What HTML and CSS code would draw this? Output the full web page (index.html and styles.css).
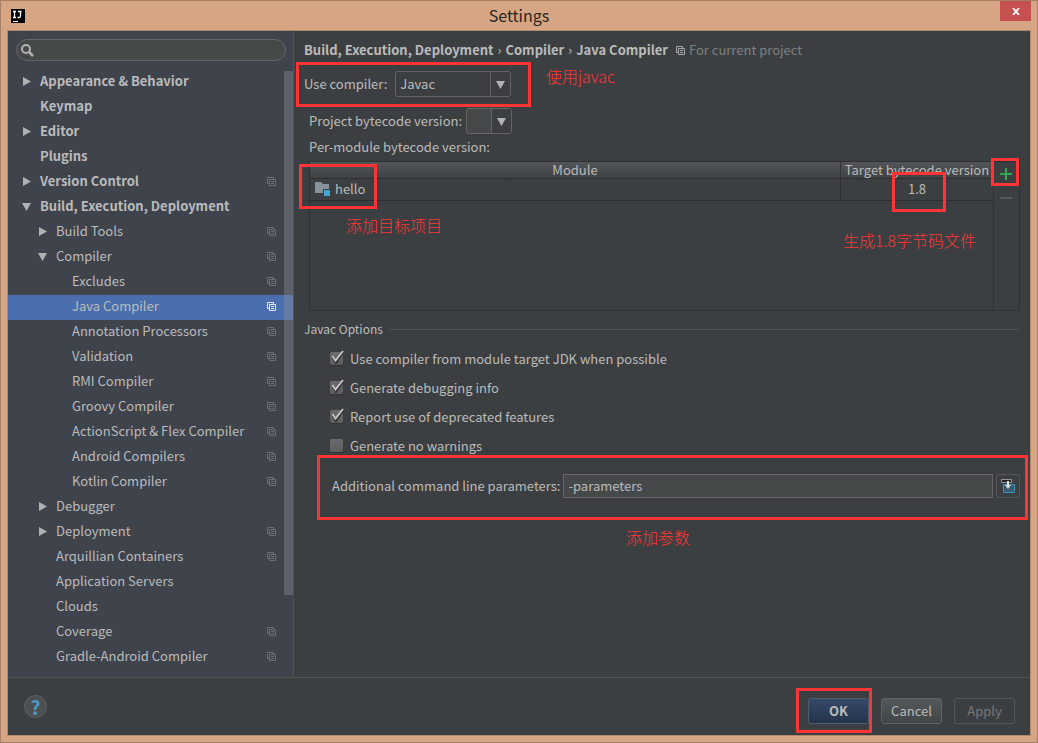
FILE: index.html
```html
<!DOCTYPE html>
<html lang="en">
<head>
<meta charset="utf-8">
<title>Settings</title>
<link rel="stylesheet" href="styles.css">
</head>
<body>
<svg class="defs" width="0" height="0" aria-hidden="true">
  <symbol id="right" viewBox="0 0 9 9"><path d="M1 0L9 4.500L1 9Z" fill="#b0b2b4"/></symbol>
  <symbol id="down" viewBox="0 0 9 9"><path d="M0 1H9L4.500 9Z" fill="#b0b2b4"/></symbol>
  <symbol id="copy" viewBox="0 0 9 9"><path d="M2 6.500H.5V.5H6.500V2M2.500 2.500H8.500V8.500H2.500ZM4 4.500H7M4 6.500H7" fill="none" stroke="currentColor"/></symbol>
  <symbol id="tick" viewBox="0 0 16 16"><path d="M4 7L7 12L14 2" fill="none" stroke="#2e2f30" stroke-width="3"/><path d="M3.500 6L6.500 10.500L14 1" fill="none" stroke="#c4c4c4" stroke-width="2"/></symbol>
</svg>
<div class="window">
  <header class="titlebar">
    <svg class="logo" viewBox="0 0 14 14"><path d="M0 0H14V14H0Z"/><path d="M2 2.500H5M3.500 2V9M2 8.500H5M7 2.500H10.500M9.500 2V7Q9.500 8.500 8 8.500H6.500" fill="none" stroke="#fff" stroke-width="1.300"/><path d="M2 12H7V13H2Z" fill="#fff"/></svg>
    <h1>Settings</h1>
    <button class="close" aria-label="Close"><svg viewBox="0 0 8 7"><path d="M1 0L7 7M7 0L1 7" stroke="#fff" stroke-width="1.800"/></svg></button>
  </header>
  <div class="dialog">
    <div class="body">
      <aside class="sidebar">
        <label class="search"><svg viewBox="0 0 13 13"><circle cx="5" cy="5" r="4" fill="none" stroke="#b0b2b2" stroke-width="2"/><path d="M8 8L12 12" stroke="#b0b2b2" stroke-width="2.500"/></svg><input type="text" aria-label="Search settings"></label>
        <nav class="tree">
          <a href="#" class="row top"><svg class="arrow"><use href="#right"/></svg><span>Appearance &amp; Behavior</span></a>
          <a href="#" class="row top"><i class="arrow"></i><span>Keymap</span></a>
          <a href="#" class="row top"><svg class="arrow"><use href="#right"/></svg><span>Editor</span></a>
          <a href="#" class="row top"><i class="arrow"></i><span>Plugins</span></a>
          <a href="#" class="row top"><svg class="arrow"><use href="#right"/></svg><span>Version Control</span><svg class="copy"><use href="#copy"/></svg></a>
          <a href="#" class="row top"><svg class="arrow"><use href="#down"/></svg><span>Build, Execution, Deployment</span></a>
          <a href="#" class="row mid"><svg class="arrow"><use href="#right"/></svg><span>Build Tools</span><svg class="copy"><use href="#copy"/></svg></a>
          <a href="#" class="row mid"><svg class="arrow"><use href="#down"/></svg><span>Compiler</span><svg class="copy"><use href="#copy"/></svg></a>
          <a href="#" class="row leaf"><span>Excludes</span><svg class="copy"><use href="#copy"/></svg></a>
          <a href="#" class="row leaf selected"><span>Java Compiler</span><svg class="copy"><use href="#copy"/></svg></a>
          <a href="#" class="row leaf"><span>Annotation Processors</span><svg class="copy"><use href="#copy"/></svg></a>
          <a href="#" class="row leaf"><span>Validation</span><svg class="copy"><use href="#copy"/></svg></a>
          <a href="#" class="row leaf"><span>RMI Compiler</span><svg class="copy"><use href="#copy"/></svg></a>
          <a href="#" class="row leaf"><span>Groovy Compiler</span><svg class="copy"><use href="#copy"/></svg></a>
          <a href="#" class="row leaf"><span>ActionScript &amp; Flex Compiler</span><svg class="copy"><use href="#copy"/></svg></a>
          <a href="#" class="row leaf"><span>Android Compilers</span><svg class="copy"><use href="#copy"/></svg></a>
          <a href="#" class="row leaf"><span>Kotlin Compiler</span><svg class="copy"><use href="#copy"/></svg></a>
          <a href="#" class="row mid"><svg class="arrow"><use href="#right"/></svg><span>Debugger</span></a>
          <a href="#" class="row mid"><svg class="arrow"><use href="#right"/></svg><span>Deployment</span><svg class="copy"><use href="#copy"/></svg></a>
          <a href="#" class="row mid"><i class="arrow"></i><span>Arquillian Containers</span><svg class="copy"><use href="#copy"/></svg></a>
          <a href="#" class="row mid"><i class="arrow"></i><span>Application Servers</span></a>
          <a href="#" class="row mid"><i class="arrow"></i><span>Clouds</span></a>
          <a href="#" class="row mid"><i class="arrow"></i><span>Coverage</span><svg class="copy"><use href="#copy"/></svg></a>
          <a href="#" class="row mid"><i class="arrow"></i><span>Gradle-Android Compiler</span><svg class="copy"><use href="#copy"/></svg></a>
          <div class="thumb"></div>
        </nav>
      </aside>
      <main class="main">
        <div class="crumbs"><b>Build, Execution, Deployment</b><span>›</span><b>Compiler</b><span>›</span><b>Java Compiler</b><svg class="copy"><use href="#copy"/></svg><span class="hint">For current project</span></div>
        <div class="field compiler">
          <label for="compiler">Use compiler:</label>
          <div class="combo wide"><select id="compiler"><option>Javac</option></select><span class="drop"><svg><use href="#down"/></svg></span></div>
          <div class="mark"></div><span class="note">使用javac</span>
        </div>
        <div class="field level">
          <label for="level">Project bytecode version:</label>
          <div class="combo"><select id="level"><option></option></select><span class="drop"><svg><use href="#down"/></svg></span></div>
        </div>
        <div class="caption">Per-module bytecode version:</div>
        <div class="modules">
          <div class="grid">
            <table>
              <thead><tr><th>Module</th><th class="target">Target bytecode version</th></tr></thead>
              <tbody><tr>
                <td><div class="module"><svg viewBox="0 0 16 14"><path d="M0 0H6L8 2H14V11H0Z" fill="#87939a"/><path d="M8 7H16V14H8Z" fill="#3c3f41"/><path d="M9 8H15V14H9Z" fill="#40a5d1"/></svg>hello<div class="mark"></div><span class="note">添加目标项目</span></div></td>
                <td><div class="version">1.8<div class="mark"></div><span class="note">生成1.8字节码文件</span></div></td>
              </tr></tbody>
            </table>
          </div>
          <div class="tools">
            <button aria-label="Add"><svg viewBox="0 0 12 12"><path d="M0 6H12M6 0V12" stroke="#2eab4e" stroke-width="2"/></svg><span class="mark"></span></button>
            <button aria-label="Remove"><svg viewBox="0 0 12 12"><path d="M0 6H12" stroke="#58595a" stroke-width="2"/></svg></button>
          </div>
        </div>
        <section class="options">
          <h2>Javac Options</h2>
          <label class="check"><input type="checkbox" checked><svg><use href="#tick"/></svg><span>Use compiler from module target JDK when possible</span></label>
          <label class="check"><input type="checkbox" checked><svg><use href="#tick"/></svg><span>Generate debugging info</span></label>
          <label class="check"><input type="checkbox" checked><svg><use href="#tick"/></svg><span>Report use of deprecated features</span></label>
          <label class="check"><input type="checkbox"><svg><use href="#tick"/></svg><span>Generate no warnings</span></label>
          <div class="params">
            <label for="params">Additional command line parameters:</label>
            <input id="params" type="text" value="-parameters">
            <button aria-label="Expand"><svg viewBox="0 0 14 14"><path d="M2.500 5.500H13.500V13.500H2.500Z" fill="#375b70" stroke="#4191bd"/><path d="M.5 .5H10.500V3.500H.5Z" fill="#222428" stroke="#909294"/><path d="M6 2H8V6H10L7 10L4 6H6Z" fill="#dcdcdc"/></svg></button>
            <div class="mark"></div><span class="note">添加参数</span>
          </div>
        </section>
      </main>
    </div>
    <footer class="footer">
      <button class="help" aria-label="Help">?</button>
      <div class="confirm"><button class="btn ok">OK</button><span class="mark"></span></div>
      <button class="btn">Cancel</button>
      <button class="btn apply" disabled>Apply</button>
    </footer>
  </div>
</div>
</body>
</html>
```
FILE: styles.css
```css
* { box-sizing: border-box; }
body { margin: 0; }
body, button, input, select { font: 13px/20px "Noto Sans CJK SC", "Noto Sans", sans-serif; color: #bbbbbb; }
button, input, select { margin: 0; padding: 0; border: 0; background: none; }
svg { display: block; flex: none; }
a { color: inherit; text-decoration: none; }
.defs { position: absolute; }

.window { min-height: 100vh; display: flex; flex-direction: column; padding: 0 6px 6px; border: 1px solid #a67f65; background: #d6a583; }
.titlebar { display: flex; align-items: center; height: 29px; position: relative; }
.logo { width: 14px; height: 14px; margin-left: 4px; }
.titlebar h1 { flex: 1; margin: 0; padding: 0 18px 2px 0; text-align: center; font-size: 16px; font-weight: 400; color: #2b2622; }
.close { position: absolute; top: 0; right: 0; width: 31px; height: 20px; background: #c75050; display: grid; place-items: center; }
.close svg { width: 8px; height: 7px; }
.dialog { flex: 1; display: flex; flex-direction: column; border: 1px solid #b0896c; background: #3c3f41; }
.body { flex: 1; display: flex; }

.sidebar { width: 286px; flex: none; padding-top: 8px; border-right: 1px solid #515456; background: #3f434c; }
.search { display: flex; align-items: center; gap: 4px; height: 22px; margin: 0 7px 9px 8px; padding: 0 8px 0 4px; border: 1px solid #646566; border-radius: 11px; background: #45494a; }
.search svg { width: 13px; height: 13px; }
.search input { flex: 1; min-width: 0; outline: none; }
.tree { position: relative; padding-bottom: 7px; }
.row { display: flex; align-items: center; height: 25px; padding: 0 17px 2px 0; }
.row span { flex: 1; padding-bottom: 2px; white-space: nowrap; }
.arrow { width: 9px; height: 9px; flex: none; }
.copy { width: 9px; height: 9px; color: #6c7075; }
.top { padding-left: 14px; gap: 9px; font-weight: 700; }
.mid { padding-left: 30px; gap: 9px; }
.leaf { padding-left: 64px; }
.selected { background: #4b6eaf; }
.selected .copy { color: #e6eaf0; }
.thumb { position: absolute; top: 1px; right: 0; width: 9px; height: 524px; background: rgba(140, 142, 150, .4); }

.main { flex: 1; min-width: 0; padding: 9px 10px 0; }
.mark { position: absolute; border: 3px solid #ff3535; pointer-events: none; }
.note { position: absolute; color: #ff3535; font-size: 16px; line-height: 20px; font-weight: 300; white-space: nowrap; }
.crumbs { display: flex; align-items: center; gap: 4px; height: 20px; }
.crumbs .copy { color: #a5a7a8; margin-left: 4px; }
.hint { color: #7d7f80; }
.field { display: flex; align-items: center; position: relative; height: 26px; }
.compiler { margin-top: 11px; gap: 8px; }
.level { margin: 11px 0 0 5px; gap: 4px; }
.combo { position: relative; width: 46px; height: 26px; }
.combo select { appearance: none; width: 100%; height: 100%; padding-left: 4px; border: 1px solid #646464; border-radius: 3px; background: #45494a; }
.combo.wide { width: 116px; }
.combo.wide select { background: #3c3f41; }
.drop { position: absolute; top: 1px; right: 1px; bottom: 1px; width: 20px; display: grid; place-items: center; border-left: 1px solid #646464; background: #3c3f41; pointer-events: none; }
.drop svg { width: 9px; height: 9px; }
.compiler .mark { left: -8px; top: -9px; width: 235px; height: 45px; }
.compiler .note { left: 242px; top: -5px; }
.caption { margin: 3px 0 4px 5px; }

.modules { display: flex; height: 150px; margin-left: 5px; border: 1px solid #2f3132; }
.grid { flex: 1; }
table { width: 100%; border-collapse: separate; border-spacing: 0; table-layout: fixed; }
th { height: 17px; padding: 0; line-height: 16px; font-weight: 400; white-space: nowrap; border-bottom: 1px solid #2b2d2e; background: linear-gradient(#525658, #3f4244); }
td { height: 22px; padding: 0 0 1px; border-bottom: 1px solid #2b2d2e; }
th.target { width: 153px; }
th + th, td + td { border-left: 1px solid #2f3132; }
.module { display: flex; align-items: center; gap: 4px; position: relative; padding-left: 5px; }
.module svg { width: 16px; height: 14px; }
.module .mark { left: -11px; top: -15px; width: 78px; height: 45px; }
.module .note { left: 36px; top: 36px; }
.version { position: relative; text-align: center; }
.version .mark { left: 51px; top: -7px; width: 54px; height: 40px; }
.version .note { left: 2px; top: 51px; }
.tools { width: 26px; border-left: 1px solid #2f3132; }
.tools button { position: relative; display: grid; place-items: center; width: 24px; height: 24px; }
.tools svg { width: 12px; height: 12px; }
.tools .mark { left: -3px; top: -4px; width: 28px; height: 28px; }

.options { margin-top: 8px; }
h2 { display: flex; align-items: center; gap: 6px; margin: 0 1px 5px 0; font-size: 12px; line-height: 20px; font-weight: 400; }
h2::after { content: ""; flex: 1; height: 1px; background: #515455; }
.check { display: flex; align-items: center; position: relative; height: 29px; padding-left: 26px; gap: 7px; }
.check input { appearance: none; width: 13px; height: 13px; border-radius: 2px; background: linear-gradient(#6a6b6c, #5c5e5f); box-shadow: 0 1px 1px #2f3132; }
.check svg { position: absolute; left: 25px; top: 6px; width: 16px; height: 16px; visibility: hidden; }
.check input:checked + svg { visibility: visible; }
.params { display: flex; align-items: center; position: relative; height: 24px; margin: 14px 0 0 28px; }
.params input { flex: 1; min-width: 0; height: 24px; margin: 0 3px 0 2px; padding: 0 5px 2px; border: 1px solid #646464; background: #45494a; }
.params button { display: grid; place-items: center; width: 24px; height: 24px; border: 1px solid #555859; border-radius: 2px; }
.params button svg { width: 14px; height: 14px; }
.params .mark { left: -15px; right: -8px; top: -19px; height: 65px; }
.params .note { left: 294px; top: 53px; }

.footer { display: flex; align-items: center; gap: 12px; height: 58px; padding: 9px 15px 0 16px; border-top: 1px solid #515455; }
.help { width: 23px; height: 23px; margin: -9px auto 0 0; border: 1px solid #5c6062; border-radius: 50%; background: #4c5052; color: #4a9cc7; font-size: 19px; line-height: 20px; font-weight: 700; }
.btn { width: 61px; height: 26px; border: 1px solid #5f6263; border-radius: 3px; background: linear-gradient(#53585a, #414546); }
.confirm { position: relative; display: flex; }
.ok { background: linear-gradient(#37496a, #24344b); border-color: #4e5c6e; font-weight: 700; }
.apply { background: none; color: #777777; border-color: #555859; }
.confirm .mark { left: -12px; top: -10px; width: 76px; height: 45px; }
```
